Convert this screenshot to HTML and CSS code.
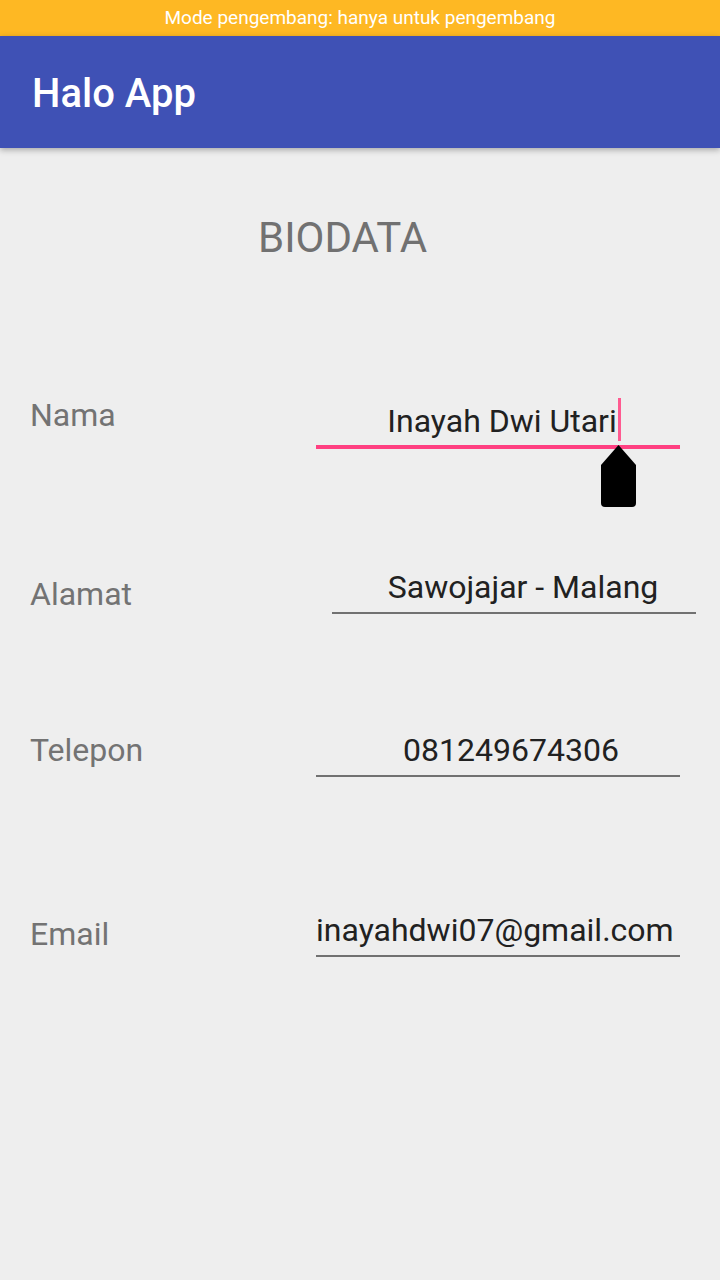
FILE: index.html
```html
<!DOCTYPE html>
<html lang="id">
<head>
<meta charset="utf-8">
<title>Halo App</title>
<link rel="stylesheet" href="styles.css">
</head>
<body>
<div class="status">Mode pengembang: hanya untuk pengembang</div>
<header class="appbar"><h1 class="title">Halo App</h1></header>
<main class="content">
  <h2 class="heading">BIODATA</h2>

  <div class="row row-nama">
    <span class="label">Nama</span>
    <div class="field field-focus">
      <span class="value">Inayah Dwi Utari<span class="caret"><span class="caret-bar"></span><svg class="handle" viewBox="0 0 35 63" width="35" height="63"><path d="M17.5 0 L35 20 V58 Q35 62 31 62 H4 Q0 62 0 58 V20 Z" fill="#000"/></svg></span></span>
    </div>
  </div>

  <div class="row row-alamat">
    <span class="label">Alamat</span>
    <div class="field field-alamat"><span class="value">Sawojajar - Malang</span></div>
  </div>

  <div class="row row-telepon">
    <span class="label">Telepon</span>
    <div class="field field-telepon"><span class="value">081249674306</span></div>
  </div>

  <div class="row row-email">
    <span class="label">Email</span>
    <div class="field field-email"><span class="value">inayahdwi07@gmail.com</span></div>
  </div>
</main>
</body>
</html>
```

FILE: styles.css
```css
html, body {
  margin: 0;
  padding: 0;
}

body {
  width: 720px;
  min-height: 1280px;
  background: #eeeeee;
  font-family: Roboto, "Noto Sans", sans-serif;
  overflow: hidden;
}

.status {
  height: 36px;
  line-height: 36px;
  background: #feb823;
  color: #ffffff;
  font-size: 19px;
  text-align: center;
}

.appbar {
  position: relative;
  z-index: 2;
  height: 112px;
  box-sizing: border-box;
  padding: 34px 0 0 32px;
  background: #3f51b5;
  box-shadow: 0 2px 6px rgba(0, 0, 0, 0.3);
}

.title {
  margin: 0;
  font-size: 40px;
  line-height: 48px;
  font-weight: 500;
  color: #ffffff;
}

.content {
  display: flex;
  flex-direction: column;
}

.heading {
  margin: 66px 0 0 258px;
  font-size: 42px;
  line-height: 48px;
  font-weight: 400;
  color: #717171;
}

.row {
  display: flex;
  align-items: flex-start;
  padding-left: 30px;
}

.label {
  font-size: 32px;
  line-height: 38px;
  color: #737373;
}

.field {
  width: 364px;
  margin-left: auto;
  margin-right: 40px;
  box-sizing: border-box;
  padding-bottom: 6px;
  border-bottom: 2px solid #717171;
  text-align: center;
  white-space: nowrap;
}

.value {
  font-size: 32px;
  line-height: 38px;
  color: #212121;
}

.row-nama {
  margin-top: 134px;
}
.row-nama .field {
  margin-top: 6px;
}
.field-focus {
  padding-left: 8px;
  padding-bottom: 5px;
  border-bottom: 4px solid #ff4081;
}

.caret {
  position: relative;
  display: inline-block;
  width: 0;
  height: 0;
}
.caret-bar {
  position: absolute;
  left: 1px;
  top: -34px;
  width: 3px;
  height: 43px;
  background: #ff5a90;
}
.handle {
  position: absolute;
  left: -16px;
  top: 13px;
}

.row-alamat {
  margin-top: 119px;
}
.row-alamat .label {
  margin-top: 7px;
}
.field-alamat {
  margin-right: 24px;
  padding-left: 18px;
}

.row-telepon {
  margin-top: 117px;
}
.field-telepon {
  padding-left: 26px;
}

.row-email {
  margin-top: 134px;
}
.row-email .label {
  margin-top: 4px;
}
.field-email {
  text-align: left;
}
```
